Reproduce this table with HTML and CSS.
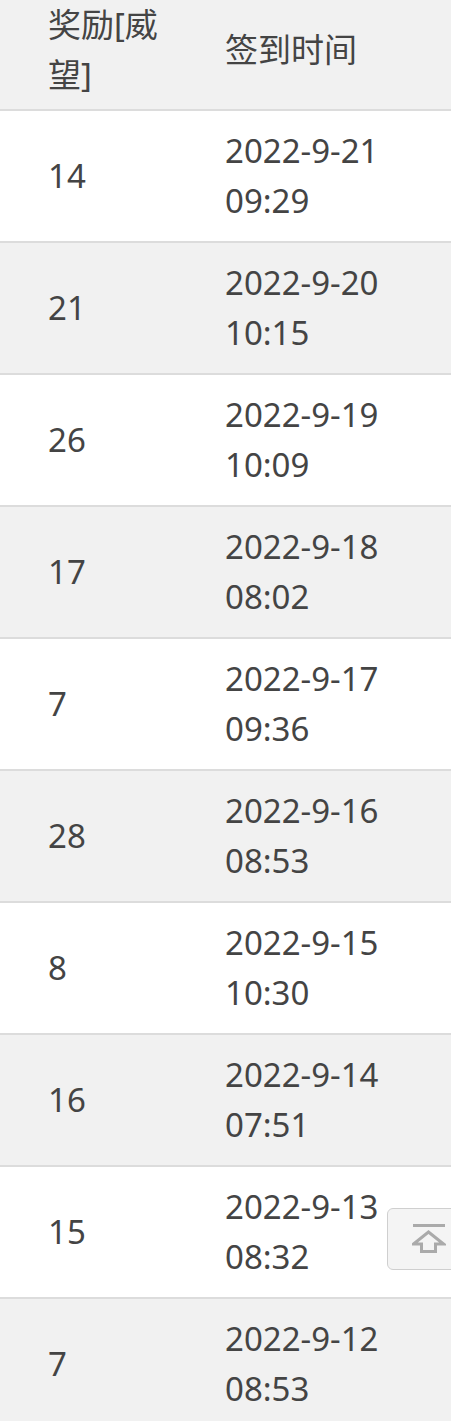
FILE: index.html
```html
<!DOCTYPE html>
<html lang="zh-CN">
<head>
<meta charset="utf-8">
<title>签到记录</title>
<link rel="stylesheet" href="styles.css">
</head>
<body>
<table class="log">
  <thead>
    <tr><th class="c1">奖励[威望]</th><th class="c2">签到时间</th></tr>
  </thead>
  <tbody>
    <tr><td class="c1">14</td><td class="c2">2022-9-21 09:29</td></tr>
    <tr><td class="c1">21</td><td class="c2">2022-9-20 10:15</td></tr>
    <tr><td class="c1">26</td><td class="c2">2022-9-19 10:09</td></tr>
    <tr><td class="c1">17</td><td class="c2">2022-9-18 08:02</td></tr>
    <tr><td class="c1">7</td><td class="c2">2022-9-17 09:36</td></tr>
    <tr><td class="c1">28</td><td class="c2">2022-9-16 08:53</td></tr>
    <tr><td class="c1">8</td><td class="c2">2022-9-15 10:30</td></tr>
    <tr><td class="c1">16</td><td class="c2">2022-9-14 07:51</td></tr>
    <tr><td class="c1">15</td><td class="c2">2022-9-13 08:32</td></tr>
    <tr><td class="c1">7</td><td class="c2">2022-9-12 08:53</td></tr>
  </tbody>
</table>
<a class="totop" href="#" aria-label="返回顶部">
  <svg width="34" height="34" viewBox="0 0 34 34" aria-hidden="true">
    <rect x="1" y="2" width="32" height="3" fill="#aaa"/>
    <path d="M16.5 10 L31.5 22 L23.5 22 L23.5 29.5 L9.5 29.5 L9.5 22 L1.5 22 Z" fill="none" stroke="#aaa" stroke-width="3" stroke-linejoin="miter"/>
  </svg>
</a>
</body>
</html>
```

FILE: styles.css
```css
html, body {
  margin: 0;
  padding: 0;
  background: #fff;
}
body {
  font-family: "Noto Sans", "Noto Sans CJK SC", sans-serif;
  color: #444;
  font-size: 33px;
  line-height: 50px;
}
.log {
  width: 451px;
  border-collapse: collapse;
  table-layout: fixed;
}
.log th, .log td {
  text-align: left;
  font-weight: normal;
  vertical-align: middle;
  padding: 15px 0 15px 48px;
  border-bottom: 2px solid #dcdcdc;
  height: 100px;
}
.log th {
  background: #f1f1f1;
  padding-top: 0;
  padding-bottom: 9px;
  height: 100px;
}
.log .c1 { width: 129px; }
.log .c2 { width: 226px; }
.log tbody tr:nth-child(even) td {
  background: #f1f1f1;
}
.totop {
  position: fixed;
  left: 387px;
  bottom: 151px;
  width: 70px;
  height: 62px;
  border: 1px solid #cfcfcf;
  border-radius: 6px;
  background: #f4f4f4;
  display: flex;
  align-items: center;
  padding-left: 24px;
  box-sizing: border-box;
}
```
